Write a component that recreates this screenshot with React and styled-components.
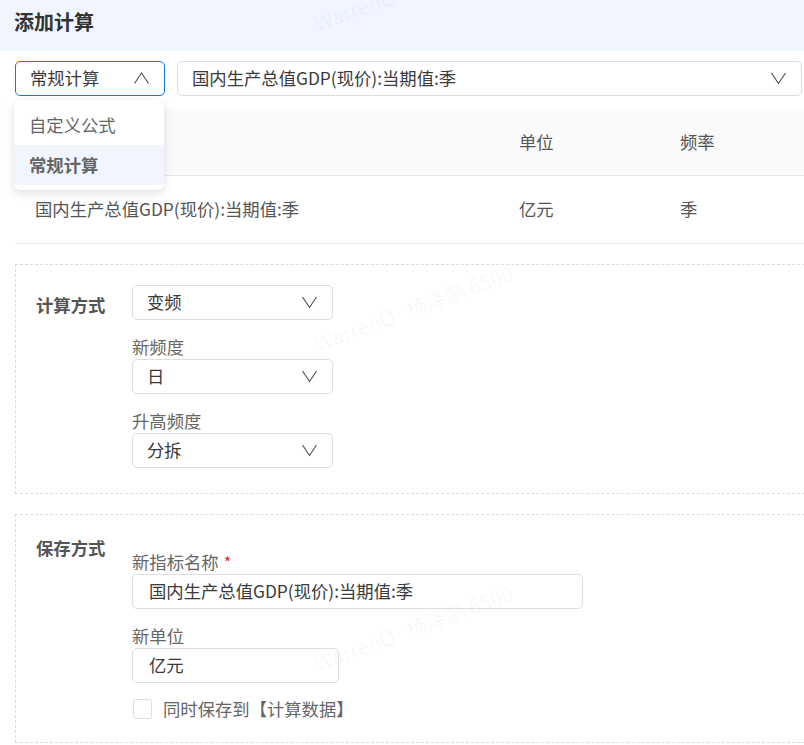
import React from "react";
import styled, { createGlobalStyle } from "styled-components";

const Global = createGlobalStyle`
  html, body {
    margin: 0;
    padding: 0;
    background: #fff;
    overflow: hidden;
  }
  * { box-sizing: border-box; }
`;

const Page = styled.div`
  position: relative;
  width: 804px;
  height: 745px;
  overflow: hidden;
  font-family: "Noto Sans CJK SC", "Noto Sans", sans-serif;
  font-size: 17.33px;
  color: #333;
`;

const Header = styled.div`
  height: 51px;
  padding-left: 14px;
  display: flex;
  align-items: center;
  padding-bottom: 9px;
  background: #f0f5ff;
  font-size: 20px;
  font-weight: 700;
  color: #333;
`;

const Toolbar = styled.div`
  display: flex;
  gap: 12px;
  padding: 10px 2px 0 15px;
`;

const Box = styled.div`
  display: flex;
  align-items: center;
  justify-content: space-between;
  flex: ${(p) => (p.$grow ? "1" : "none")};
  width: ${(p) => (p.$w ? `${p.$w}px` : "auto")};
  height: 35px;
  padding: 0 14px 2px ${(p) => p.$pl || 14}px;
  background: #fff;
  border: 1px solid ${(p) => (p.$open ? "#1677e6" : "#dedede")};
  border-radius: 5px;
  color: #3a3a3a;
  line-height: 1;
`;

const Menu = styled.div`
  position: absolute;
  left: 14px;
  top: 100px;
  width: 150px;
  height: 90px;
  padding: 5px 0;
  background: #fff;
  border-radius: 6px;
  box-shadow: 0 3px 10px rgba(0, 0, 0, 0.13);
  z-index: 3;
`;

const MenuItem = styled.div`
  display: flex;
  align-items: center;
  height: 40px;
  padding: 0 0 2px 15px;
  color: #666;
  font-weight: ${(p) => (p.$active ? 700 : 400)};
  background: ${(p) => (p.$active ? "#f0f5ff" : "transparent")};
`;

const Table = styled.div`
  margin: 13px 0 0 15px;
`;

const Row = styled.div`
  display: grid;
  grid-template-columns: 504px 161px 1fr;
  align-items: center;
  height: ${(p) => (p.$head ? 67 : 68)}px;
  padding-bottom: 2px;
  background: ${(p) => (p.$head ? "#fafafa" : "#fff")};
  border-bottom: 1px solid #e8e8e8;
  color: #555;
`;

const Cell = styled.div`
  padding-left: ${(p) => p.$pl || 0}px;
`;

const Section = styled.div`
  display: flex;
  width: 810px;
  height: ${(p) => p.$h}px;
  margin: ${(p) => p.$mt}px 0 0 15px;
  padding: 20px 0 0 20px;
  border: 1px dashed #dcdcdc;
`;

const SectionTitle = styled.div`
  width: 96px;
  flex: none;
  padding-top: ${(p) => p.$pt}px;
  font-weight: 700;
  color: #555;
  line-height: 24px;
`;

const Fields = styled.div`
  display: flex;
  flex-direction: column;
  padding-top: ${(p) => p.$pt || 0}px;
`;

const Label = styled.div`
  height: 24px;
  margin-top: ${(p) => p.$mt || 0}px;
  margin-bottom: 1px;
  line-height: 25px;
  color: #666;
`;

const Star = styled.span`
  margin-left: 5px;
  color: #f5222d;
  font-size: 16px;
`;

const CheckRow = styled.label`
  display: flex;
  align-items: center;
  gap: 11px;
  margin: 16px 0 0 1px;
  color: #666;
  line-height: 18px;
`;

const CheckBox = styled.span`
  width: 19px;
  height: 20px;
  border: 1px solid #dedede;
  border-radius: 3px;
  background: #fff;
`;

const Marks = styled.div`
  position: absolute;
  inset: 0;
  pointer-events: none;
  z-index: 5;
`;

const Mark = styled.div`
  position: absolute;
  left: 320px;
  top: ${(p) => p.$top}px;
  font-size: 20.5px;
  white-space: nowrap;
  color: rgba(0, 0, 0, 0.04);
  transform: rotate(-20deg);
  transform-origin: left bottom;
`;

const Chevron = ({ up }) => (
  <svg width="16" height="16" viewBox="0 0 16 16" fill="none">
    <path
      d={up ? "M0.5 13.5 L7.5 3 L14.5 13.5" : "M0.5 3 L7.5 13.5 L14.5 3"}
      stroke="#555"
      strokeWidth="1.2"
    />
  </svg>
);

const Select = ({ value, ...rest }) => (
  <Box {...rest}>
    <span>{value}</span>
    <Chevron up={rest.$open} />
  </Box>
);

const NAME = "国内生产总值GDP(现价):当期值:季";

export default function App() {
  return (
    <Page>
      <Global />
      <Header>添加计算</Header>
      <Toolbar>
        <Select $w={150} $open value="常规计算" />
        <Select $grow value={NAME} />
      </Toolbar>
      <Menu>
        <MenuItem>自定义公式</MenuItem>
        <MenuItem $active>常规计算</MenuItem>
      </Menu>
      <Table>
        <Row $head>
          <Cell />
          <Cell>单位</Cell>
          <Cell>频率</Cell>
        </Row>
        <Row>
          <Cell $pl={20}>{NAME}</Cell>
          <Cell>亿元</Cell>
          <Cell>季</Cell>
        </Row>
      </Table>

      <Section $mt={20} $h={230}>
        <SectionTitle $pt={8}>计算方式</SectionTitle>
        <Fields>
          <Select $w={201} value="变频" />
          <Label $mt={14}>新频度</Label>
          <Select $w={201} value="日" />
          <Label $mt={14}>升高频度</Label>
          <Select $w={201} value="分拆" />
        </Fields>
      </Section>

      <Section $mt={20} $h={229}>
        <SectionTitle $pt={1}>保存方式</SectionTitle>
        <Fields $pt={14}>
          <Label>
            新指标名称<Star>*</Star>
          </Label>
          <Box $w={451} $pl={16}>{NAME}</Box>
          <Label $mt={14}>新单位</Label>
          <Box $w={207} $pl={16}>亿元</Box>
          <CheckRow>
            <CheckBox />
            同时保存到【计算数据】
          </CheckRow>
        </Fields>
      </Section>

      <Marks>
        {[7, 327, 647].map((top) => (
          <Mark key={top} $top={top}>WarrenQ&nbsp;&nbsp;&nbsp;杨泽鹏 6500</Mark>
        ))}
      </Marks>
    </Page>
  );
}
